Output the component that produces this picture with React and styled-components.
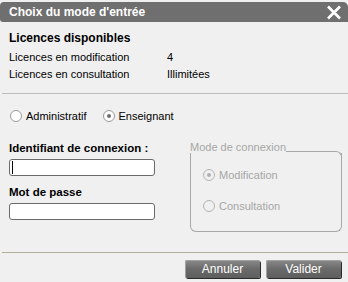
import React from 'react';
import styled, { createGlobalStyle } from 'styled-components';

const Global = createGlobalStyle`
  html, body { margin: 0; padding: 0; background: #f0f0f0; }
  body { font-family: "Liberation Sans", Arial, sans-serif; font-size: 11px; color: #000; }
`;

const Dialog = styled.div`
  width: 348px;
  height: 282px;
  background: #f0f0f0;
  display: flex;
  flex-direction: column;
  overflow: hidden;
`;

const TitleBar = styled.div`
  margin-top: 2px;
  height: 20px;
  background: #6f6f6f;
  border-radius: 4px 5px 0 3px;
  display: flex;
  align-items: center;
  justify-content: space-between;
  padding: 0 6px 0 9px;
  color: #fff;
  font-weight: bold;
  font-size: 12px;
`;

const Section = styled.div`
  padding: 8px 9px 0;
`;

const Heading = styled.div`
  font-weight: bold;
  font-size: ${p => p.$size || 11.5}px;
  height: 16px;
  line-height: 16px;
  margin-bottom: ${p => p.$gap || 0}px;
`;

const InfoRow = styled.div`
  display: grid;
  grid-template-columns: 158px 1fr;
  height: 17px;
  line-height: 17px;
`;

const Divider = styled.div`
  height: 1px;
  margin-left: 2px;
  background: ${p => p.$color || '#bdbdbd'};
  margin-top: ${p => p.$top || 0}px;
`;

const RadioRow = styled.div`
  display: flex;
  gap: 16px;
  padding: 15px 0 0 10px;
  height: 14px;
`;

const RadioLabel = styled.label`
  display: flex;
  align-items: center;
  gap: 4px;
  height: 13px;
  color: ${p => (p.$disabled ? '#a6a6a6' : '#000')};
`;

const Circle = styled.span`
  width: 10px;
  height: 10px;
  border-radius: 50%;
  border: 1px solid ${p => (p.$disabled ? '#b4b4b4' : '#9a9a9a')};
  background: ${p => (p.$disabled ? '#f0f0f0' : '#fff')};
  display: flex;
  align-items: center;
  justify-content: center;
  box-sizing: content-box;
  &::after {
    content: '';
    width: 4px;
    height: 4px;
    border-radius: 50%;
    background: ${p => (p.$checked ? (p.$disabled ? '#b0b0b0' : '#707070') : 'transparent')};
  }
`;

const Main = styled.div`
  display: flex;
  padding: 17px 0 0 9px;
  gap: 35px;
`;

const Fields = styled.div`
  width: 146px;
  display: flex;
  flex-direction: column;
`;

const Input = styled.div`
  height: 15px;
  border: 1px solid #6a6a6a;
  border-radius: 3px;
  background: #fff;
  margin-top: 3px;
  margin-bottom: ${p => p.$gap || 0}px;
  position: relative;
  ${p => p.$focused && `
    &::before {
      content: '';
      position: absolute;
      left: 2px;
      top: 1px;
      width: 1px;
      height: 13px;
      background: #000;
    }
  `}
`;

const Fieldset = styled.div`
  width: 152px;
  margin-top: 1px;
  display: flex;
  flex-direction: column;
`;

const Legend = styled.div`
  display: flex;
  align-items: flex-end;
  color: #a6a6a6;
  height: 12px;
  span { line-height: 12px; }
  &::after {
    content: '';
    flex: 1;
    height: 7px;
    border-top: 1px solid #a8a8a8;
    border-right: 1px solid #a8a8a8;
    border-top-right-radius: 6px;
    margin-bottom: -6px;
  }
`;

const Box = styled.div`
  height: 63px;
  border: 1px solid #a8a8a8;
  border-top: none;
  border-radius: 0 0 6px 6px;
  display: flex;
  flex-direction: column;
  gap: 18px;
  padding: 15px 0 0 12px;
`;

const Footer = styled.div`
  display: flex;
  justify-content: flex-end;
  gap: 6px;
  padding: 7px 7px 0 0;
`;

const Button = styled.button`
  width: 75px;
  height: 18px;
  padding: 0;
  border: none;
  border-radius: 2px;
  background: linear-gradient(#8a8a8a, #6a6a6a 50%, #5e5e5e);
  box-shadow: inset 1px 1px 0 #a0a0a0, 1px 1px 0 #2a2a2a;
  color: #fff;
  font-family: "Liberation Sans", Arial, sans-serif;
  font-size: 12px;
  line-height: 17px;
`;

const Close = () => (
  <svg width="16" height="15" viewBox="0 0 16 15">
    <path d="M2 1.5 L14 13.5 M14 1.5 L2 13.5" stroke="#fff" strokeWidth="2.6" />
  </svg>
);

const Radio = ({ label, checked, disabled }) => (
  <RadioLabel $disabled={disabled}>
    <Circle $checked={checked} $disabled={disabled} />
    {label}
  </RadioLabel>
);

export default function App() {
  return (
    <Dialog>
      <Global />
      <TitleBar>
        <span>Choix du mode d'entrée</span>
        <Close />
      </TitleBar>
      <Section>
        <Heading $gap={3} $size={12}>Licences disponibles</Heading>
        <InfoRow>
          <span>Licences en modification</span>
          <span>4</span>
        </InfoRow>
        <InfoRow>
          <span>Licences en consultation</span>
          <span>Illimitées</span>
        </InfoRow>
      </Section>
      <Divider $top={10} />
      <RadioRow>
        <Radio label="Administratif" />
        <Radio label="Enseignant" checked />
      </RadioRow>
      <Main>
        <Fields>
          <Heading>Identifiant de connexion :</Heading>
          <Input $focused $gap={8} />
          <Heading>Mot de passe</Heading>
          <Input />
        </Fields>
        <Fieldset>
          <Legend><span>Mode de connexion</span></Legend>
          <Box>
            <Radio label="Modification" checked disabled />
            <Radio label="Consultation" disabled />
          </Box>
        </Fieldset>
      </Main>
      <Divider $top={20} $color="#b5ad9e" />
      <Footer>
        <Button>Annuler</Button>
        <Button>Valider</Button>
      </Footer>
    </Dialog>
  );
}
